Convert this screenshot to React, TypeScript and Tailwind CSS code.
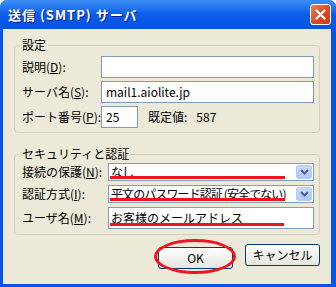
import { ReactNode } from 'react'

const font = { fontFamily: '"Noto Sans CJK JP", "Liberation Sans", sans-serif' }

function Label({ text, k, rest, width }: { text: string; k: string; rest?: string; width: string }) {
  return (
    <span className={`${width} shrink-0 text-[12px] leading-[14px] text-black whitespace-nowrap`}>
      {text}(<span className="underline underline-offset-1">{k}</span>){rest ?? ':'}
    </span>
  )
}

function TextBox({ value, className, mark }: { value?: string; className: string; mark?: boolean }) {
  return (
    <div className={`relative flex items-center border border-[#7f9db9] bg-white px-[4px] text-[12px] text-black ${className}`}>
      {value}
      {mark && <div className="absolute left-[1px] bottom-[2px] w-[174px] h-[3px] bg-[#f0141e]" />}
    </div>
  )
}

function Combo({ value }: { value: string }) {
  return (
    <div className="relative flex items-center border border-[#7f9db9] bg-white h-[18px] w-[206px] pl-[2px] pr-[1px] text-[12px] text-black">
      <span className="flex-1 whitespace-nowrap overflow-hidden tracking-[-0.9px]">{value}</span>
      <div className="w-[16px] h-[14px] rounded-[2px] bg-gradient-to-b from-[#c9d9fc] to-[#b0c6f6] border border-[#b7cbf6] flex items-center justify-center">
        <svg width="9" height="6" viewBox="0 0 9 6">
          <path d="M1 1 L4.5 4.5 L8 1" stroke="#4d6185" strokeWidth="2" fill="none" />
        </svg>
      </div>
      <div className="absolute left-[1px] bottom-[1px] w-[175px] h-[3px] bg-[#f0141e]" />
    </div>
  )
}

function Group({ title, children, className }: { title: string; children: ReactNode; className: string }) {
  return (
    <fieldset className={`mx-[11px] border border-[#d0d0bf] rounded-[4px] pl-[7px] pr-[5px] ${className}`}>
      <legend className="-ml-[2px] px-[2px] text-[12px] leading-[14px] text-black">{title}</legend>
      {children}
    </fieldset>
  )
}

export default function App() {
  return (
    <div style={font} className="w-[336px] h-[287px] bg-[#0a55e6] rounded-t-[7px] flex flex-col overflow-hidden select-none">
      {/* title bar */}
      <div className="h-[29px] shrink-0 flex items-center pl-[8px] pr-[5px] rounded-t-[7px] bg-gradient-to-b from-[#3d8ff7] via-[#0a5ce9] to-[#0553e1]">
        <span className="flex-1 text-white font-bold text-[13px] tracking-[1px] [text-shadow:1px_1px_0_#0a1a80] whitespace-nowrap">
          送信 (SMTP) サーバ
        </span>
        <div className="w-[21px] h-[21px] rounded-[3px] border border-white bg-gradient-to-br from-[#e9835f] via-[#dd4a23] to-[#c8391a] flex items-center justify-center">
          <svg width="11" height="11" viewBox="0 0 11 11">
            <path d="M1.5 1.5 L9.5 9.5 M9.5 1.5 L1.5 9.5" stroke="white" strokeWidth="2.2" strokeLinecap="square" />
          </svg>
        </div>
      </div>

      {/* body */}
      <div className="flex-1 ml-[3px] mr-[5px] mb-[3px] bg-[#ece9d8] flex flex-col">
        <Group title="設定" className="mt-[9px] pb-[4px]">
          <div className="flex flex-col gap-[3px] pt-[4px]">
            <div className="flex items-center">
              <Label text="説明" k="D" width="w-[79px]" />
              <TextBox className="h-[22px] w-[213px]" />
            </div>
            <div className="flex items-center">
              <Label text="サーバ名" k="S" width="w-[79px]" />
              <TextBox value="mail1.aiolite.jp" className="h-[22px] w-[213px]" />
            </div>
            <div className="flex items-center">
              <Label text="ポート番号" k="P" width="w-[79px]" />
              <TextBox value="25" className="h-[22px] w-[37px]" />
              <span className="ml-[10px] text-[12px] text-black">既定値:</span>
              <span className="ml-[9px] text-[12px] text-black">587</span>
            </div>
          </div>
        </Group>

        <Group title="セキュリティと認証" className="mt-[14px] pb-[5px]">
          <div className="flex flex-col gap-[4px] pt-[2px]">
            <div className="flex items-center">
              <Label text="接続の保護" k="N" width="w-[86px]" />
              <Combo value="なし" />
            </div>
            <div className="flex items-center">
              <Label text="認証方式" k="I" width="w-[86px]" />
              <Combo value="平文のパスワード認証 (安全でない)" />
            </div>
            <div className="flex items-center">
              <Label text="ユーザ名" k="M" width="w-[86px]" />
              <TextBox value="お客様のメールアドレス" className="h-[22px] w-[206px] pl-[2px]" mark />
            </div>
          </div>
        </Group>

        <div className="flex justify-end gap-[12px] pr-[11px] mt-[9px]">
          <div className="relative">
            <button className="w-[75px] h-[22px] rounded-[3px] border border-[#003c74] bg-gradient-to-b from-[#ffffff] to-[#e6e5de] text-[12px] text-black">
              OK
            </button>
            <div className="absolute -left-[4px] -right-[3px] -top-[5px] -bottom-[5px] rounded-[50%] border-[3px] border-[#f0141e]" />
          </div>
          <button className="w-[75px] h-[22px] rounded-[3px] border border-[#003c74] bg-gradient-to-b from-[#ffffff] to-[#e6e5de] text-[12px] text-black">
            キャンセル
          </button>
        </div>
      </div>
    </div>
  )
}
